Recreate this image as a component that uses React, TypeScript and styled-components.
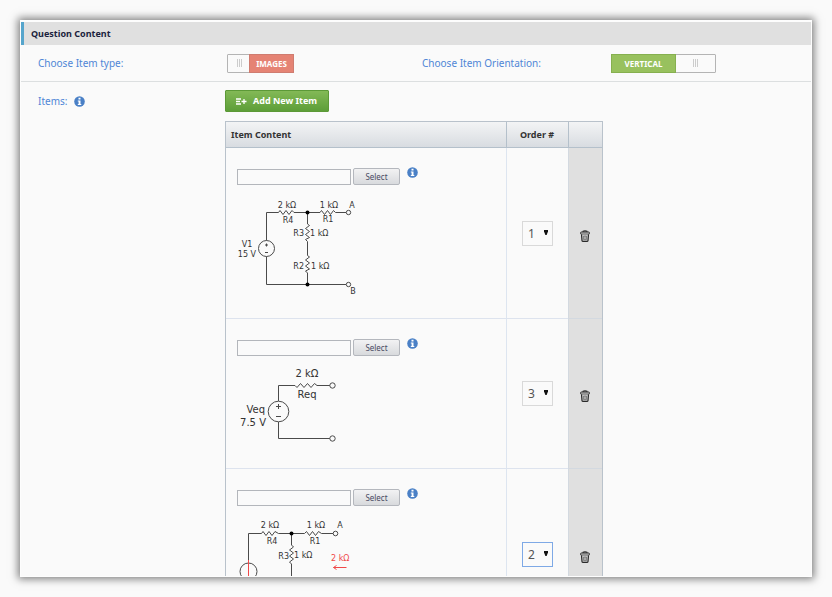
import React, { useId, useState } from "react";
import styled, { createGlobalStyle } from "styled-components";

const GlobalStyle = createGlobalStyle`
  *, *::before, *::after { box-sizing: border-box; }
  body {
    margin: 0;
    background: #fafafa;
    color: #222b45;
    font-family: "Noto Sans", "Open Sans", sans-serif;
    font-size: 10px;
  }
  button, input, select { font-family: inherit; }
`;

const Page = styled.div`
  height: 100vh;
  padding: 20px;
  display: flex;
`;

const Panel = styled.main`
  flex: 1;
  min-width: 0;
  overflow: hidden;
  background: #fafafa;
  border: 1px solid #fdfdfd;
  border-top-width: 2px;
  box-shadow: 0 0 8px 2px rgba(0, 0, 0, 0.5);
`;

const PanelTitle = styled.h1`
  margin: 0;
  height: 23px;
  padding-left: 7px;
  border-left: 3px solid #56a5cc;
  background: #e0e0e0;
  color: #1b1f3d;
  font-size: 9px;
  font-weight: 700;
  line-height: 23px;
`;

const OptionRow = styled.section`
  display: grid;
  grid-template-columns: 189px 195px 189px 1fr;
  align-items: center;
  height: 37px;
  padding-left: 17px;
  border-bottom: 1px solid #dcdfe0;
`;

const ItemsRow = styled.section`
  display: grid;
  grid-template-columns: 187px minmax(0, 378px);
  padding: 8px 0 0 17px;
`;

const FieldLabel = styled.span`
  display: flex;
  align-items: center;
  gap: 7px;
  height: 22px;
  color: #4f86d6;
  font-size: 10px;
`;

const Toggle = styled.button<{ $on: boolean; $wide?: boolean }>`
  display: flex;
  flex-direction: ${(p) => (p.$on ? "row" : "row-reverse")};
  width: ${(p) => (p.$wide ? 105 : 67)}px;
  height: 19px;
  padding: 0;
  border: 1px solid #b4b4b4;
  border-radius: 1px;
  background: #fafafa;
  cursor: pointer;
`;

const ToggleText = styled.span<{ $on: boolean }>`
  flex: ${(p) => (p.$on ? "0 0 65px" : "1")};
  margin: -1px;
  border: 1px solid ${(p) => (p.$on ? "#86b04f" : "#cf7c70")};
  background: ${(p) => (p.$on ? "#98c15e" : "#e58374")};
  color: #ffffff;
  font-size: 8px;
  font-weight: 700;
  line-height: 17px;
  text-align: center;
`;

const Grip = styled.span<{ $on: boolean }>`
  flex: ${(p) => (p.$on ? "1" : "0 0 22px")};
  align-self: center;
  display: flex;
  justify-content: center;
  gap: 1px;
  height: 8px;

  i {
    width: 1px;
    background: #cccccc;
  }
`;

const AddButton = styled.button`
  display: flex;
  align-items: center;
  gap: 6px;
  height: 22px;
  margin-bottom: 9px;
  padding: 0 11px 0 10px;
  border: 1px solid #5c9937;
  border-radius: 1px;
  background: linear-gradient(#83b956, #5d9e38);
  color: #ffffff;
  font-size: 9px;
  font-weight: 700;
  line-height: 20px;
  white-space: nowrap;
  cursor: pointer;
`;

const ItemTable = styled.table`
  width: 100%;
  table-layout: fixed;
  border-collapse: separate;
  border-spacing: 0;
  border: 1px solid #b9c2cb;
`;

const Column = styled.col<{ $width?: number }>`
  width: ${(p) => (p.$width ? `${p.$width}px` : "auto")};
`;

const HeadCell = styled.th<{ $center?: boolean }>`
  height: 26px;
  padding: 0 6px 0 5px;
  border-bottom: 1px solid #b4c0cb;
  background: linear-gradient(#f3f4f5, #d8dce1);
  color: #333333;
  font-size: 9px;
  font-weight: 700;
  text-align: ${(p) => (p.$center ? "center" : "left")};

  & + & { border-left: 1px solid #b4c0cb; }
`;

const ContentCell = styled.td`
  padding: 20px 11px 18px;
  border-bottom: 1px solid #dde3ee;
  vertical-align: top;
`;

const OrderCell = styled.td`
  padding: 0;
  border-left: 1px solid #dde5f0;
  border-bottom: 1px solid #dde3ee;
  vertical-align: middle;
`;

const ActionCell = styled.td`
  padding: 8px 2px 0 0;
  border-left: 1px solid #d3d9e0;
  border-bottom: 1px solid #d3d9e0;
  background: #e0e0e0;
  text-align: center;
  vertical-align: middle;
`;

const FileRow = styled.div`
  display: flex;
  align-items: flex-end;
  gap: 2px;
  height: 17px;
  margin-bottom: 11px;
`;

const PathInput = styled.input`
  width: 114px;
  height: 16px;
  padding: 0 4px;
  border: 1px solid #b3b6bb;
  background: #fafafa;
  font-size: 10px;
`;

const SelectButton = styled.button`
  width: 47px;
  height: 17px;
  padding: 0;
  border: 1px solid #b4b7bd;
  border-radius: 2px;
  background: linear-gradient(#f2f2f3, #d8dadd);
  color: #4b4b63;
  font-size: 8px;
  line-height: 15px;
  cursor: pointer;
`;

const InfoSlot = styled.span`
  display: flex;
  align-self: flex-start;
  margin: -1px 0 0 5px;
`;

const OrderBox = styled.div`
  position: relative;
  width: 31px;
  height: 25px;
  margin: 0 auto;

  svg {
    position: absolute;
    top: 9px;
    right: 5px;
    pointer-events: none;
  }
`;

const OrderSelect = styled.select<{ $active: boolean }>`
  appearance: none;
  display: block;
  width: 100%;
  height: 100%;
  padding: 0 0 0 5px;
  border: 1px solid ${(p) => (p.$active ? "#7ea9e6" : "#d9d9d9")};
  border-radius: 0;
  background: #fafafa;
  color: #555555;
  font-size: 12px;
`;

const IconButton = styled.button`
  display: inline-flex;
  padding: 0;
  border: 0;
  background: none;
  cursor: pointer;
`;

const Drawing = styled.svg<{ $size: number }>`
  display: block;
  overflow: visible;
  fill: none;
  stroke: #4a4a4a;
  stroke-width: 1;

  text {
    fill: #333333;
    stroke: none;
    font-family: "DejaVu Sans", sans-serif;
    font-size: ${(p) => p.$size}px;
  }
  .end { text-anchor: end; }
  .mid { text-anchor: middle; }
  .node { fill: #000000; stroke: none; }
  .open { fill: #fafafa; }
  .red { stroke: #f04848; }
  text.red { fill: #f04848; stroke: none; }
`;

const InfoIcon = () => (
  <svg width="11" height="11" viewBox="0 0 11 11" aria-hidden="true">
    <circle cx="5.5" cy="5.5" r="5.3" fill="#4a80c6" />
    <path d="M4.5 1.8h2v1.7h-2zM3.8 4.4h2.7v3.6h.8v1.1H3.8V8h.8V5.5h-.8z" fill="#ffffff" />
  </svg>
);

const AddListIcon = () => (
  <svg width="11" height="9" viewBox="0 0 11 9" aria-hidden="true">
    <path d="M0 2h5M0 4.5h4M0 7h5M5.5 4.5h5M8 2v5" stroke="#ffffff" strokeWidth="1.3" fill="none" />
  </svg>
);

const TrashIcon = () => (
  <svg width="10" height="12" viewBox="0 0 10 12" fill="none" stroke="#2b2b2b" aria-hidden="true">
    <path d="M2.5 1.6Q5 .2 7.5 1.6" strokeWidth="1.2" />
    <rect x="0.6" y="2" width="8.8" height="2.2" rx="0.8" fill="#c8c8c8" />
    <path d="M1.5 4.4l.5 6.2q0 .7.7.7h4.6q.7 0 .7-.7l.5-6.2" fill="#d0d0d0" strokeWidth="1.2" />
    <path d="M3.5 6h3v3.6h-3zM5 6v3.6" stroke="#666666" strokeWidth=".7" />
  </svg>
);

const ArrowIcon = () => (
  <svg width="4" height="5" viewBox="0 0 4 5" aria-hidden="true">
    <path d="M0 0h4v1.5L2.6 5H1.4L0 1.5z" fill="#111111" />
  </svg>
);

const TheveninSource = () => (
  <Drawing $size={8} width="130" height="104" viewBox="0 0 130 104" role="img" aria-label="Circuit with V1, R1, R2, R3 and R4">
    <path d="M29.5 44.5V16.5H41.5l1.5-2 3 4 3-4 3 4 3-4 2 2H83l1.5-2 3 4 3-4 3 4 3-4 2 2H109M29.5 60.5V88.5H109" />
    <path d="M70.5 16.5V28l2 1.5-4 3 4 3-4 3 4 3-4 2 2 2V59.5l2 1.5-4 3 4 3-4 3 4 3-4 2 2 2V88.5" />
    <circle cx="29.5" cy="52.5" r="8" />
    <path d="M28 49h3M29.5 47.5v3M28 56.5h3" />
    <circle className="node" cx="70.5" cy="16.5" r="2" />
    <circle className="node" cx="70.5" cy="88.5" r="2" />
    <circle className="open" cx="111.5" cy="16.5" r="2.2" />
    <circle className="open" cx="111.5" cy="88.5" r="2.2" />
    <text className="mid" x="50" y="12">2 kΩ</text>
    <text className="mid" x="51" y="27">R4</text>
    <text className="mid" x="92" y="12">1 kΩ</text>
    <text className="mid" x="91" y="26">R1</text>
    <text className="mid" x="115" y="12">A</text>
    <text className="end" x="67" y="40">R3</text>
    <text x="73" y="40">1 kΩ</text>
    <text className="end" x="67" y="73">R2</text>
    <text x="74" y="73">1 kΩ</text>
    <text className="mid" x="10" y="51">V1</text>
    <text className="end" x="19" y="61">15 V</text>
    <text className="mid" x="116" y="98">B</text>
  </Drawing>
);

const EquivalentCircuit = () => (
  <Drawing $size={10} width="130" height="83" viewBox="0 0 130 83" role="img" aria-label="Equivalent circuit with Veq and Req">
    <path d="M41.5 34V18.5H58l2 2 3.5-4 3.5 4 3.5-4 3.5 4 3.5-4 2.5 2H93M41.5 55V71.5H93" />
    <circle cx="41.5" cy="44.5" r="10.3" />
    <path d="M39 39.5h5M41.5 37v5M39 49.5h5" />
    <circle className="open" cx="95.5" cy="18.5" r="2.7" />
    <circle className="open" cx="95.5" cy="71.5" r="2.7" />
    <text className="mid" x="70" y="10">2 kΩ</text>
    <text className="mid" x="70" y="31">Req</text>
    <text className="end" x="28" y="46">Veq</text>
    <text className="end" x="29" y="59">7.5 V</text>
  </Drawing>
);

const CurrentSource = () => (
  <Drawing $size={8} width="130" height="104" viewBox="0 0 130 104" role="img" aria-label="Circuit with resistance seen from terminal A">
    <path d="M11.5 46V16.5H24.5l1.5-2 3 4 3-4 3 4 3-4 3.5 2H67.5l2-2 3 4 3-4 3 4 3-4 3 2H96M54.5 16.5V28l2 2-4 3 4 3-4 3 4 3-4 3 2 2V88.5M11.5 63V88.5H96" />
    <circle cx="11.5" cy="54.5" r="8.5" />
    <path className="red" d="M11.5 43v23M96.5 50.5h13M99.5 48.5l-3 2 3 2" />
    <circle className="node" cx="54.5" cy="16.5" r="2" />
    <circle className="node" cx="54.5" cy="88.5" r="2" />
    <circle className="open" cx="98.5" cy="16.5" r="2.3" />
    <circle className="open" cx="98.5" cy="88.5" r="2.3" />
    <text className="mid" x="33" y="11">2 kΩ</text>
    <text className="mid" x="35" y="27">R4</text>
    <text className="mid" x="79" y="11">1 kΩ</text>
    <text className="mid" x="78" y="27">R1</text>
    <text className="mid" x="103" y="11">A</text>
    <text className="end" x="52" y="42">R3</text>
    <text x="57" y="41">1 kΩ</text>
    <text className="red" x="94" y="44">2 kΩ</text>
  </Drawing>
);

const items = [
  { id: 1, order: "1", Circuit: TheveninSource },
  { id: 2, order: "3", Circuit: EquivalentCircuit },
  { id: 3, order: "2", Circuit: CurrentSource },
];

function Switch({ on, text, labelId, wide }: { on: boolean; text: string; labelId: string; wide?: boolean }) {
  const [checked, setChecked] = useState(on);
  return (
    <Toggle type="button" role="switch" aria-checked={checked} aria-labelledby={labelId} $on={on} $wide={wide} onClick={() => setChecked(!checked)}>
      <ToggleText $on={on}>{text}</ToggleText>
      <Grip $on={on}><i /><i /><i /></Grip>
    </Toggle>
  );
}

function ItemRow({ item, active, onFocus }: { item: (typeof items)[number]; active: boolean; onFocus: () => void }) {
  const [order, setOrder] = useState(item.order);
  const { Circuit } = item;
  return (
    <tr>
      <ContentCell>
        <FileRow>
          <PathInput type="text" aria-label={`Image path for item ${item.id}`} />
          <SelectButton type="button">Select</SelectButton>
          <InfoSlot><InfoIcon /></InfoSlot>
        </FileRow>
        <Circuit />
      </ContentCell>
      <OrderCell>
        <OrderBox>
          <OrderSelect aria-label={`Order of item ${item.id}`} value={order} $active={active} onFocus={onFocus} onChange={(e) => setOrder(e.target.value)}>
            <option>1</option>
            <option>2</option>
            <option>3</option>
          </OrderSelect>
          <ArrowIcon />
        </OrderBox>
      </OrderCell>
      <ActionCell>
        <IconButton type="button" aria-label={`Delete item ${item.id}`}><TrashIcon /></IconButton>
      </ActionCell>
    </tr>
  );
}

export default function App() {
  const typeId = useId();
  const orientationId = useId();
  const [activeItem, setActiveItem] = useState(3);
  return (
    <>
      <GlobalStyle />
      <Page>
        <Panel>
          <PanelTitle>Question Content</PanelTitle>
          <OptionRow>
            <FieldLabel id={typeId}>Choose Item type:</FieldLabel>
            <Switch on={false} text="IMAGES" labelId={typeId} />
            <FieldLabel id={orientationId}>Choose Item Orientation:</FieldLabel>
            <Switch on wide text="VERTICAL" labelId={orientationId} />
          </OptionRow>
          <ItemsRow>
            <FieldLabel>Items: <InfoIcon /></FieldLabel>
            <div>
              <AddButton type="button"><AddListIcon />Add New Item</AddButton>
              <ItemTable>
                <colgroup>
                  <Column />
                  <Column $width={62} />
                  <Column $width={34} />
                </colgroup>
                <thead>
                  <tr>
                    <HeadCell scope="col">Item Content</HeadCell>
                    <HeadCell scope="col" $center>Order #</HeadCell>
                    <HeadCell scope="col" aria-label="Actions" />
                  </tr>
                </thead>
                <tbody>
                  {items.map((item) => (
                    <ItemRow key={item.id} item={item} active={item.id === activeItem} onFocus={() => setActiveItem(item.id)} />
                  ))}
                </tbody>
              </ItemTable>
            </div>
          </ItemsRow>
        </Panel>
      </Page>
    </>
  );
}
